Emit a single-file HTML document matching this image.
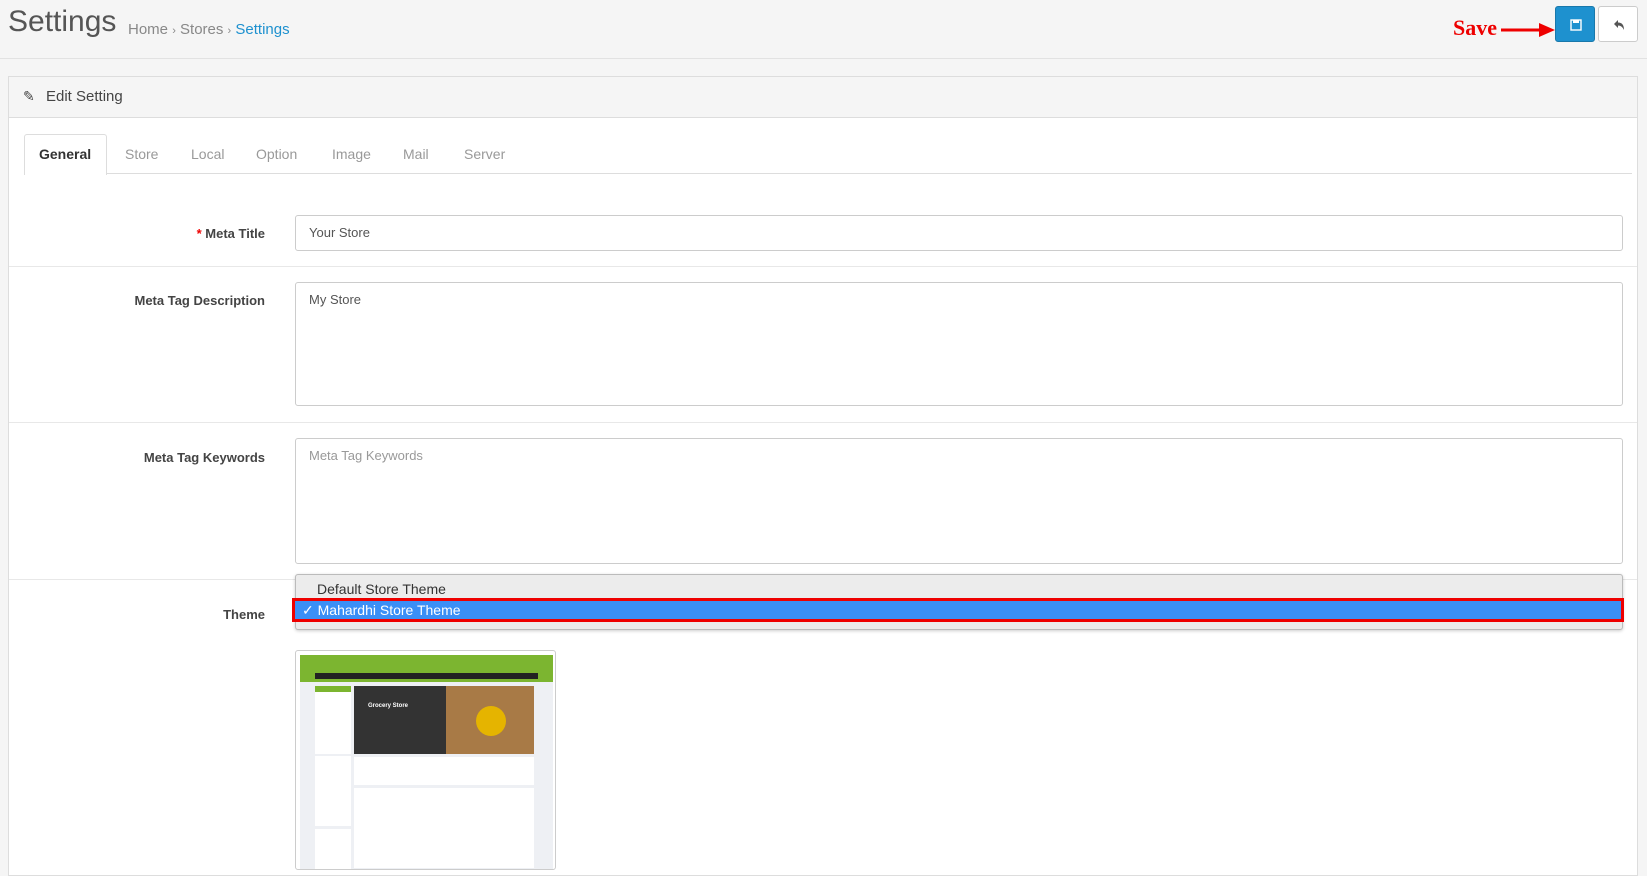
<!DOCTYPE html>
<html><head><meta charset="utf-8"><style>
*{box-sizing:border-box;margin:0;padding:0}
body{width:1647px;height:851px;overflow:hidden;background:#f5f5f5;font-family:"Liberation Sans",sans-serif;font-size:13px;color:#666;position:relative}
.abs{position:absolute}
.hdr{left:0;top:0;width:1647px;height:59px;border-bottom:1px solid #e2e2e2}
.title{left:8px;top:5px;font-size:30px;color:#555;font-weight:300}
.bc{left:128px;top:21px;font-size:15px;color:#888}
.bc b{font-weight:normal;color:#1e91cf}
.btn{top:6px;width:40px;height:36px;border-radius:3px}
.panel{left:8px;top:76px;width:1630px;height:800px;background:#fff;border:1px solid #ddd}
.ph{left:0;top:0;width:100%;height:41px;background:#f5f5f5;border-bottom:1px solid #ddd;font-size:15px;color:#444;padding:11px 0 0 37px}
.tabs{left:15px;top:57px;width:1608px;height:40px;border-bottom:1px solid #ddd}
.tab{position:absolute;top:12px;font-size:14px;color:#999}
.lbl{position:absolute;right:1372px;font-size:13px;font-weight:bold;color:#444;text-align:right}
.inp{position:absolute;left:286px;width:1328px;border:1px solid #ccc;border-radius:3px;background:#fff;padding:9px 13px;font-size:13px;color:#555}
.hr{position:absolute;left:0;width:100%;height:1px;background:#e8e8e8}
</style></head><body>
<div class="abs hdr"></div>
<div class="abs title">Settings</div>
<div class="abs bc">Home <span style="font-size:11px">›</span> Stores <span style="font-size:11px">›</span> <b>Settings</b></div>
<div class="abs" style="left:1453px;top:15px;font-family:'Liberation Serif',serif;font-weight:bold;font-size:22px;color:#e00">Save</div>
<svg class="abs" style="left:1501px;top:22px" width="54" height="16"><line x1="0" y1="8" x2="42" y2="8" stroke="#e00" stroke-width="3"/><polygon points="38,1 54,8 38,15" fill="#e00"/></svg>
<div class="abs btn" style="left:1555px;background:#1e91cf;border:1px solid #1978ab"><svg width="40" height="36" viewBox="0 0 40 36"><rect x="15" y="13" width="10" height="10" fill="none" stroke="#fff" stroke-width="1.4"/><rect x="17" y="13" width="6" height="3" fill="#fff"/></svg></div>
<div class="abs btn" style="left:1598px;background:#fff;border:1px solid #ccc"><svg width="40" height="36" viewBox="0 0 40 36"><path d="M15 17 L19 13 L19 15.5 Q25 15.5 25 23 Q23 18.5 19 18.5 L19 21 Z" fill="#555"/></svg></div>
<div class="abs panel">
<div class="abs ph"><span class="abs" style="left:14px;top:11px;font-size:14px;color:#444">✎</span>Edit Setting</div>
<div class="abs tabs">
<div class="abs" style="left:0;top:0;width:83px;height:41px;background:#fff;border:1px solid #ddd;border-bottom:none;border-radius:3px 3px 0 0"></div>
<div class="tab" style="left:15px;color:#333;font-weight:bold">General</div>
<div class="tab" style="left:101px">Store</div>
<div class="tab" style="left:167px">Local</div>
<div class="tab" style="left:232px">Option</div>
<div class="tab" style="left:308px">Image</div>
<div class="tab" style="left:379px">Mail</div>
<div class="tab" style="left:440px">Server</div>
</div>
<div class="lbl" style="top:149px"><span style="color:#e00">* </span>Meta Title</div>
<div class="inp" style="top:138px;height:36px">Your Store</div>
<div class="hr" style="top:189px"></div>
<div class="lbl" style="top:216px">Meta Tag Description</div>
<div class="inp" style="top:205px;height:124px">My Store</div>
<div class="hr" style="top:345px"></div>
<div class="lbl" style="top:373px">Meta Tag Keywords</div>
<div class="inp" style="top:361px;height:126px;color:#999">Meta Tag Keywords</div>
<div class="hr" style="top:502px"></div>
<div class="lbl" style="top:530px">Theme</div>
<div class="inp" style="top:497px;height:56px;background:#ececec;border-color:#bbb;padding:6px 21px;font-size:14px;color:#333;box-shadow:0 1px 3px rgba(0,0,0,.2)">Default Store Theme</div>
<div class="abs" style="left:283px;top:521px;width:1332px;height:24px;background:#3b8ff6;border:3px solid #e00;color:#fff;font-size:14px;padding:1px 0 0 7px">✓ Mahardhi Store Theme</div>
<div class="abs" style="left:286px;top:573px;width:261px;height:220px;border:1px solid #ccc;border-radius:3px;background:#fff;overflow:hidden">
<div class="abs" style="left:4px;top:4px;width:253px;height:27px;background:#7cb530"></div>
<div class="abs" style="left:19px;top:22px;width:223px;height:6px;background:#222"></div>
<div class="abs" style="left:4px;top:31px;width:253px;height:190px;background:#eef0f4"></div>
<div class="abs" style="left:19px;top:35px;width:36px;height:68px;background:#fff"></div>
<div class="abs" style="left:19px;top:35px;width:36px;height:6px;background:#7cb530"></div>
<div class="abs" style="left:58px;top:35px;width:180px;height:68px;background:#333"></div>
<div class="abs" style="left:150px;top:35px;width:88px;height:68px;background:#a87a46"></div>
<div class="abs" style="left:180px;top:55px;width:30px;height:30px;border-radius:50%;background:#e5b400"></div>
<div class="abs" style="left:72px;top:52px;color:#fff;font-size:6px;font-weight:bold">Grocery Store</div>
<div class="abs" style="left:58px;top:106px;width:180px;height:28px;background:#fff"></div>
<div class="abs" style="left:19px;top:105px;width:36px;height:70px;background:#fff"></div>
<div class="abs" style="left:58px;top:137px;width:180px;height:80px;background:#fff"></div>
<div class="abs" style="left:19px;top:178px;width:36px;height:40px;background:#fff"></div>
</div>
</div>
</body></html>
